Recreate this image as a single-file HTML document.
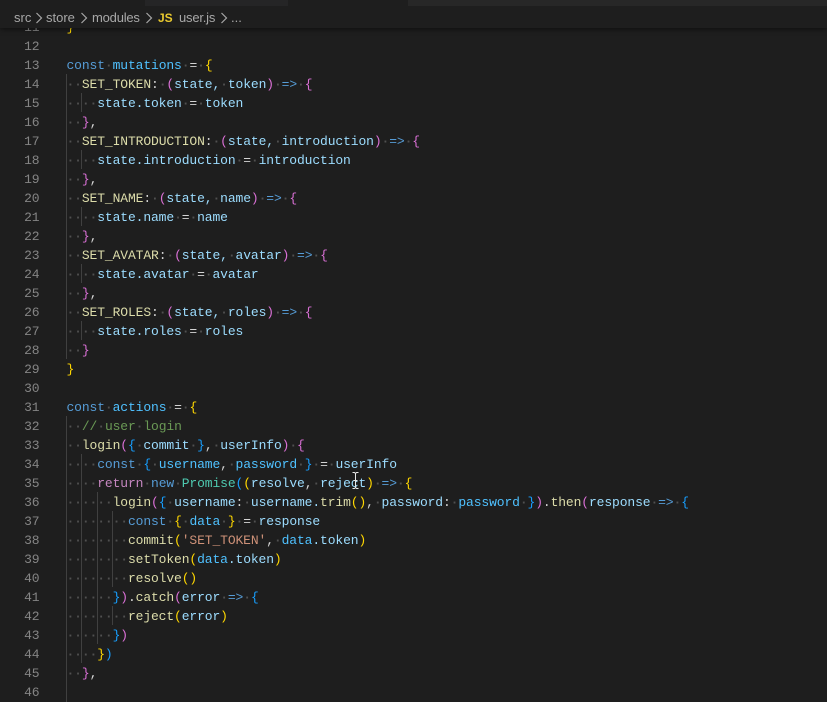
<!DOCTYPE html>
<html><head><meta charset="utf-8">
<style>
html,body{margin:0;padding:0;background:#1e1e1e;}
#r{position:relative;width:827px;height:702px;overflow:hidden;background:#1e1e1e;}
pre{position:absolute;margin:0;font:13px/19px "Liberation Mono",monospace;letter-spacing:-.12px;color:#d4d4d4;}
#n{left:0;top:17.5px;width:39.5px;text-align:right;color:#858585;}
#c{left:66.5px;top:17.5px;color:#9cdcfe;}
i{font-style:normal;font-weight:bold;color:#505050}
.k{color:#569cd6}.v{color:#4fc1ff}.p{color:#9cdcfe}.f{color:#dcdcaa}.y{color:#ffd700}.m{color:#da70d6}.b{color:#179fff}
.g{color:#6a9955}.s{color:#ce9178}.r{color:#c586c0}.t{color:#4ec9b0}.o{color:#d4d4d4}
.ln{position:absolute;width:1px;background:#404040}
#top{position:absolute;left:0;top:0;width:827px;height:28px;background:#1e1e1e;box-shadow:0 1px 5px rgba(0,0,0,.55);}
.tab{position:absolute;top:0;height:6px}
.cr{position:absolute;top:9px;font:13px/18px "Liberation Sans",sans-serif;color:#a8a8a8;white-space:pre;}
svg{position:absolute}
</style></head>
<body><div id="r">
<pre id="n">11
12
13
14
15
16
17
18
19
20
21
22
23
24
25
26
27
28
29
30
31
32
33
34
35
36
37
38
39
40
41
42
43
44
45
46</pre>
<div class="ln" style="left:66px;top:74px;height:285px"></div>
<div class="ln" style="left:66px;top:416px;height:286px"></div>
<div class="ln" style="left:81px;top:93px;height:19px"></div>
<div class="ln" style="left:81px;top:150px;height:19px"></div>
<div class="ln" style="left:81px;top:207px;height:19px"></div>
<div class="ln" style="left:81px;top:264px;height:19px"></div>
<div class="ln" style="left:81px;top:321px;height:19px"></div>
<div class="ln" style="left:81px;top:454px;height:209px"></div>
<div class="ln" style="left:97px;top:492px;height:152px"></div>
<div class="ln" style="left:112px;top:511px;height:76px"></div>
<div class="ln" style="left:112px;top:606px;height:19px"></div>
<pre id="c"><span class="y">}</span>

<span class="k">const</span><i>·</i><span class="v">mutations</span><i>·</i><span class="o">=</span><i>·</i><span class="y">{</span>
<i>··</i><span class="f">SET_TOKEN</span><span class="o">:</span><i>·</i><span class="m">(</span>state,<i>·</i>token<span class="m">)</span><i>·</i><span class="k">=&gt;</span><i>·</i><span class="m">{</span>
<i>····</i>state.token<i>·</i><span class="o">=</span><i>·</i>token
<i>··</i><span class="m">}</span><span class="o">,</span>
<i>··</i><span class="f">SET_INTRODUCTION</span><span class="o">:</span><i>·</i><span class="m">(</span>state,<i>·</i>introduction<span class="m">)</span><i>·</i><span class="k">=&gt;</span><i>·</i><span class="m">{</span>
<i>····</i>state.introduction<i>·</i><span class="o">=</span><i>·</i>introduction
<i>··</i><span class="m">}</span><span class="o">,</span>
<i>··</i><span class="f">SET_NAME</span><span class="o">:</span><i>·</i><span class="m">(</span>state,<i>·</i>name<span class="m">)</span><i>·</i><span class="k">=&gt;</span><i>·</i><span class="m">{</span>
<i>····</i>state.name<i>·</i><span class="o">=</span><i>·</i>name
<i>··</i><span class="m">}</span><span class="o">,</span>
<i>··</i><span class="f">SET_AVATAR</span><span class="o">:</span><i>·</i><span class="m">(</span>state,<i>·</i>avatar<span class="m">)</span><i>·</i><span class="k">=&gt;</span><i>·</i><span class="m">{</span>
<i>····</i>state.avatar<i>·</i><span class="o">=</span><i>·</i>avatar
<i>··</i><span class="m">}</span><span class="o">,</span>
<i>··</i><span class="f">SET_ROLES</span><span class="o">:</span><i>·</i><span class="m">(</span>state,<i>·</i>roles<span class="m">)</span><i>·</i><span class="k">=&gt;</span><i>·</i><span class="m">{</span>
<i>····</i>state.roles<i>·</i><span class="o">=</span><i>·</i>roles
<i>··</i><span class="m">}</span>
<span class="y">}</span>

<span class="k">const</span><i>·</i><span class="v">actions</span><i>·</i><span class="o">=</span><i>·</i><span class="y">{</span>
<i>··</i><span class="g">//<i>·</i>user<i>·</i>login</span>
<i>··</i><span class="f">login</span><span class="m">(</span><span class="b">{</span><i>·</i>commit<i>·</i><span class="b">}</span><span class="o">,</span><i>·</i>userInfo<span class="m">)</span><i>·</i><span class="m">{</span>
<i>····</i><span class="k">const</span><i>·</i><span class="b">{</span><i>·</i><span class="v">username</span><span class="o">,</span><i>·</i><span class="v">password</span><i>·</i><span class="b">}</span><i>·</i><span class="o">=</span><i>·</i>userInfo
<i>····</i><span class="r">return</span><i>·</i><span class="k">new</span><i>·</i><span class="t">Promise</span><span class="b">(</span><span class="y">(</span>resolve<span class="o">,</span><i>·</i>reject<span class="y">)</span><i>·</i><span class="k">=&gt;</span><i>·</i><span class="y">{</span>
<i>······</i><span class="f">login</span><span class="m">(</span><span class="b">{</span><i>·</i>username<span class="o">:</span><i>·</i>username.<span class="f">trim</span><span class="y">()</span><span class="o">,</span><i>·</i>password<span class="o">:</span><i>·</i><span class="v">password</span><i>·</i><span class="b">}</span><span class="m">)</span><span class="o">.</span><span class="f">then</span><span class="m">(</span>response<i>·</i><span class="k">=&gt;</span><i>·</i><span class="b">{</span>
<i>········</i><span class="k">const</span><i>·</i><span class="y">{</span><i>·</i><span class="v">data</span><i>·</i><span class="y">}</span><i>·</i><span class="o">=</span><i>·</i>response
<i>········</i><span class="f">commit</span><span class="y">(</span><span class="s">'SET_TOKEN'</span><span class="o">,</span><i>·</i><span class="v">data</span>.token<span class="y">)</span>
<i>········</i><span class="f">setToken</span><span class="y">(</span><span class="v">data</span>.token<span class="y">)</span>
<i>········</i><span class="f">resolve</span><span class="y">()</span>
<i>······</i><span class="b">}</span><span class="m">)</span><span class="o">.</span><span class="f">catch</span><span class="m">(</span>error<i>·</i><span class="k">=&gt;</span><i>·</i><span class="b">{</span>
<i>········</i><span class="f">reject</span><span class="y">(</span>error<span class="y">)</span>
<i>······</i><span class="b">}</span><span class="m">)</span>
<i>····</i><span class="y">}</span><span class="b">)</span>
<i>··</i><span class="m">}</span><span class="o">,</span>
</pre>
<div id="top">
<div class="tab" style="left:0;width:145px;background:#1e1e1e"></div>
<div class="tab" style="left:145px;width:143px;background:#252526"></div>
<div class="tab" style="left:288px;width:120px;background:#1e1e1e"></div>
<div class="tab" style="left:408px;width:419px;background:#272727"></div>
<span class="cr" style="left:14px">src</span>
<svg style="left:35px;top:12px" width="8" height="12" viewBox="0 0 8 12"><path d="M1.5 1l5 5-5 5" fill="none" stroke="#a8a8a8" stroke-width="1.2"/></svg>
<span class="cr" style="left:46px">store</span>
<svg style="left:80px;top:12px" width="8" height="12" viewBox="0 0 8 12"><path d="M1.5 1l5 5-5 5" fill="none" stroke="#a8a8a8" stroke-width="1.2"/></svg>
<span class="cr" style="left:92px;letter-spacing:-.2px">modules</span>
<svg style="left:145px;top:12px" width="8" height="12" viewBox="0 0 8 12"><path d="M1.5 1l5 5-5 5" fill="none" stroke="#a8a8a8" stroke-width="1.2"/></svg>
<span class="cr" style="left:158px;color:#e8c82e;font-weight:bold;font-size:12px">JS</span>
<span class="cr" style="left:179px;letter-spacing:-.2px">user.js</span>
<svg style="left:220px;top:12px" width="8" height="12" viewBox="0 0 8 12"><path d="M1.5 1l5 5-5 5" fill="none" stroke="#a8a8a8" stroke-width="1.2"/></svg>
<span class="cr" style="left:231px">...</span>
</div>
<svg style="left:350px;top:471px" width="11" height="20" viewBox="0 0 11 20"><path d="M2.5 1.5h2l1 1 1-1h2M5.5 2.5v14M2.5 17.5h2l1-1 1 1h2M3.5 9.5h4" fill="none" stroke="#e8e8e8" stroke-width="1"/></svg>
</div></body></html>
